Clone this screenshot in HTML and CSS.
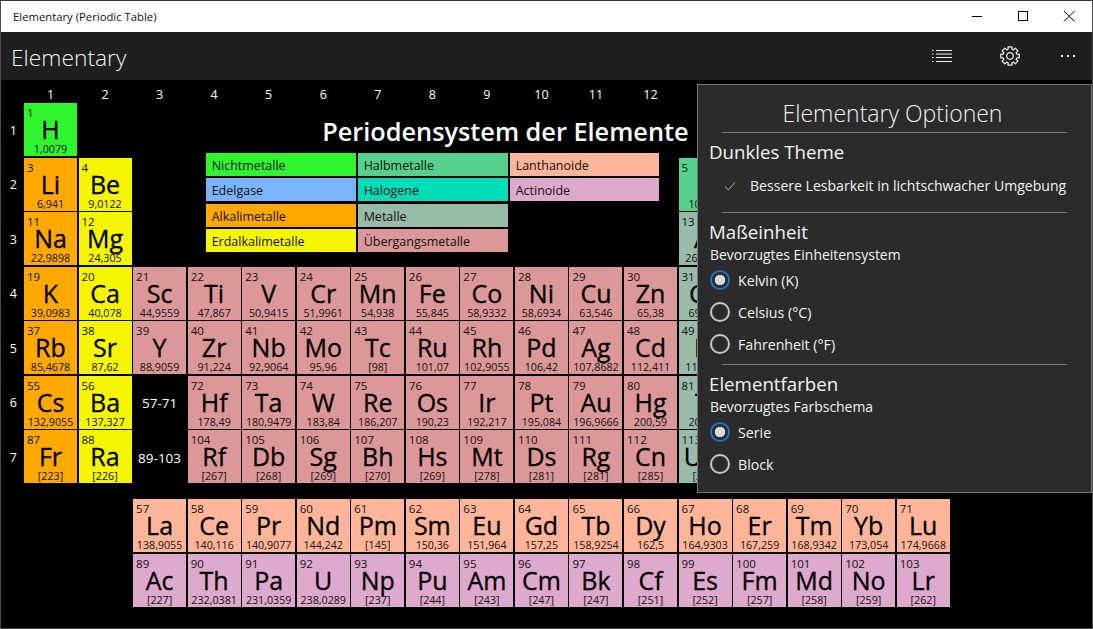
FILE: index.html
```html
<!DOCTYPE html>
<html lang="de">
<head>
  <meta charset="UTF-8" />
  <title>Elementary (Periodic Table)</title>
  <link rel="stylesheet" href="styles.css">
</head>
<body>
  <div class="window">
    <div class="titlebar">
      <span class="title-text">Elementary (Periodic Table)</span>
      <div class="win-buttons">
        <svg class="win-btn" viewBox="0 0 46 31"><path d="M18 15.500h10" stroke="#000" fill="none"/></svg>
        <svg class="win-btn" viewBox="0 0 46 31"><rect x="18.500" y="10.500" width="9" height="9" stroke="#000" fill="none"/></svg>
        <svg class="win-btn" viewBox="0 0 46 31"><path d="M18 10l10.500 10.500M28.500 10L18 20.500" stroke="#000" fill="none"/></svg>
      </div>
    </div>

    <div class="appbar">
      <span class="app-name">Elementary</span>
      <div class="app-actions">
        <svg class="list-icon" viewBox="0 0 20 14">
          <path d="M0 1.500h1.500M4 1.500h16M0 5h1.500M4 5h16M0 8.500h1.500M4 8.500h16M0 12.500h1.500M4 12.500h16" stroke="#eee" stroke-width="1.200" fill="none"/>
        </svg>
        <svg class="gear-icon" viewBox="-10 -10 20 20">
          <path d="M-1.930-6.730L-1.950-9.200H1.950L1.930-6.730L3.390-6.120L5.130-7.880L7.880-5.130L6.120-3.390L6.730-1.930L9.200-1.950V1.950L6.730 1.930L6.120 3.390L7.880 5.130L5.130 7.880L3.390 6.120L1.930 6.730L1.950 9.200H-1.950L-1.930 6.730L-3.390 6.120L-5.130 7.880L-7.880 5.130L-6.120 3.390L-6.730 1.930L-9.200 1.950V-1.950L-6.730-1.930L-6.120-3.390L-7.880-5.130L-5.130-7.880L-3.390-6.120Z" stroke="#eee" stroke-width="1.300" stroke-linejoin="round" fill="none"/>
          <circle r="3.300" stroke="#eee" stroke-width="1.300" fill="none"/>
        </svg>
        <span class="dots"><i></i><i></i><i></i></span>
      </div>
    </div>

    <div class="content">
      <div class="table">
        <span class="corner"></span>
        <span class="col-no">1</span><span class="col-no">2</span><span class="col-no">3</span><span class="col-no">4</span><span class="col-no">5</span><span class="col-no">6</span><span class="col-no">7</span><span class="col-no">8</span><span class="col-no">9</span><span class="col-no">10</span><span class="col-no">11</span><span class="col-no">12</span>

        <h1 class="table-title">Periodensystem der Elemente</h1>
        <div class="legend">
          <span class="nonmetal">Nichtmetalle</span>
          <span class="metalloid">Halbmetalle</span>
          <span class="lanth">Lanthanoide</span>
          <span class="noble">Edelgase</span>
          <span class="halogen">Halogene</span>
          <span class="actin">Actinoide</span>
          <span class="alkali">Alkalimetalle</span>
          <span class="metal">Metalle</span>
          <span class="blank"></span>
          <span class="earth">Erdalkalimetalle</span>
          <span class="trans">Übergangsmetalle</span>
        </div>

        <span class="row-no">1</span>
        <div class="el nonmetal"><span class="num">1</span><span class="sym">H</span><span class="mass">1,0079</span></div>

        <span class="row-no">2</span>
        <div class="el alkali"><span class="num">3</span><span class="sym">Li</span><span class="mass">6,941</span></div>
        <div class="el earth"><span class="num">4</span><span class="sym">Be</span><span class="mass">9,0122</span></div>
        <div class="el metalloid group13"><span class="num">5</span><span class="sym">B</span><span class="mass">10,811</span></div>

        <span class="row-no">3</span>
        <div class="el alkali"><span class="num">11</span><span class="sym">Na</span><span class="mass">22,9898</span></div>
        <div class="el earth"><span class="num">12</span><span class="sym">Mg</span><span class="mass">24,305</span></div>
        <div class="el metal group13"><span class="num">13</span><span class="sym">Al</span><span class="mass">26,9815</span></div>

        <span class="row-no">4</span>
        <div class="el alkali"><span class="num">19</span><span class="sym">K</span><span class="mass">39,0983</span></div>
        <div class="el earth"><span class="num">20</span><span class="sym">Ca</span><span class="mass">40,078</span></div>
        <div class="el trans"><span class="num">21</span><span class="sym">Sc</span><span class="mass">44,9559</span></div>
        <div class="el trans"><span class="num">22</span><span class="sym">Ti</span><span class="mass">47,867</span></div>
        <div class="el trans"><span class="num">23</span><span class="sym">V</span><span class="mass">50,9415</span></div>
        <div class="el trans"><span class="num">24</span><span class="sym">Cr</span><span class="mass">51,9961</span></div>
        <div class="el trans"><span class="num">25</span><span class="sym">Mn</span><span class="mass">54,938</span></div>
        <div class="el trans"><span class="num">26</span><span class="sym">Fe</span><span class="mass">55,845</span></div>
        <div class="el trans"><span class="num">27</span><span class="sym">Co</span><span class="mass">58,9332</span></div>
        <div class="el trans"><span class="num">28</span><span class="sym">Ni</span><span class="mass">58,6934</span></div>
        <div class="el trans"><span class="num">29</span><span class="sym">Cu</span><span class="mass">63,546</span></div>
        <div class="el trans"><span class="num">30</span><span class="sym">Zn</span><span class="mass">65,38</span></div>
        <div class="el metal"><span class="num">31</span><span class="sym">Ga</span><span class="mass">69,723</span></div>

        <span class="row-no">5</span>
        <div class="el alkali"><span class="num">37</span><span class="sym">Rb</span><span class="mass">85,4678</span></div>
        <div class="el earth"><span class="num">38</span><span class="sym">Sr</span><span class="mass">87,62</span></div>
        <div class="el trans"><span class="num">39</span><span class="sym">Y</span><span class="mass">88,9059</span></div>
        <div class="el trans"><span class="num">40</span><span class="sym">Zr</span><span class="mass">91,224</span></div>
        <div class="el trans"><span class="num">41</span><span class="sym">Nb</span><span class="mass">92,9064</span></div>
        <div class="el trans"><span class="num">42</span><span class="sym">Mo</span><span class="mass">95,96</span></div>
        <div class="el trans"><span class="num">43</span><span class="sym">Tc</span><span class="mass">[98]</span></div>
        <div class="el trans"><span class="num">44</span><span class="sym">Ru</span><span class="mass">101,07</span></div>
        <div class="el trans"><span class="num">45</span><span class="sym">Rh</span><span class="mass">102,9055</span></div>
        <div class="el trans"><span class="num">46</span><span class="sym">Pd</span><span class="mass">106,42</span></div>
        <div class="el trans"><span class="num">47</span><span class="sym">Ag</span><span class="mass">107,8682</span></div>
        <div class="el trans"><span class="num">48</span><span class="sym">Cd</span><span class="mass">112,411</span></div>
        <div class="el metal"><span class="num">49</span><span class="sym">In</span><span class="mass">114,818</span></div>

        <span class="row-no">6</span>
        <div class="el alkali"><span class="num">55</span><span class="sym">Cs</span><span class="mass">132,9055</span></div>
        <div class="el earth"><span class="num">56</span><span class="sym">Ba</span><span class="mass">137,327</span></div>
        <span class="range">57-71</span>
        <div class="el trans"><span class="num">72</span><span class="sym">Hf</span><span class="mass">178,49</span></div>
        <div class="el trans"><span class="num">73</span><span class="sym">Ta</span><span class="mass">180,9479</span></div>
        <div class="el trans"><span class="num">74</span><span class="sym">W</span><span class="mass">183,84</span></div>
        <div class="el trans"><span class="num">75</span><span class="sym">Re</span><span class="mass">186,207</span></div>
        <div class="el trans"><span class="num">76</span><span class="sym">Os</span><span class="mass">190,23</span></div>
        <div class="el trans"><span class="num">77</span><span class="sym">Ir</span><span class="mass">192,217</span></div>
        <div class="el trans"><span class="num">78</span><span class="sym">Pt</span><span class="mass">195,084</span></div>
        <div class="el trans"><span class="num">79</span><span class="sym">Au</span><span class="mass">196,9666</span></div>
        <div class="el trans"><span class="num">80</span><span class="sym">Hg</span><span class="mass">200,59</span></div>
        <div class="el metal"><span class="num">81</span><span class="sym">Tl</span><span class="mass">204,38</span></div>

        <span class="row-no">7</span>
        <div class="el alkali"><span class="num">87</span><span class="sym">Fr</span><span class="mass">[223]</span></div>
        <div class="el earth"><span class="num">88</span><span class="sym">Ra</span><span class="mass">[226]</span></div>
        <span class="range">89-103</span>
        <div class="el trans"><span class="num">104</span><span class="sym">Rf</span><span class="mass">[267]</span></div>
        <div class="el trans"><span class="num">105</span><span class="sym">Db</span><span class="mass">[268]</span></div>
        <div class="el trans"><span class="num">106</span><span class="sym">Sg</span><span class="mass">[269]</span></div>
        <div class="el trans"><span class="num">107</span><span class="sym">Bh</span><span class="mass">[270]</span></div>
        <div class="el trans"><span class="num">108</span><span class="sym">Hs</span><span class="mass">[269]</span></div>
        <div class="el trans"><span class="num">109</span><span class="sym">Mt</span><span class="mass">[278]</span></div>
        <div class="el trans"><span class="num">110</span><span class="sym">Ds</span><span class="mass">[281]</span></div>
        <div class="el trans"><span class="num">111</span><span class="sym">Rg</span><span class="mass">[281]</span></div>
        <div class="el trans"><span class="num">112</span><span class="sym">Cn</span><span class="mass">[285]</span></div>
        <div class="el metal"><span class="num">113</span><span class="sym">Uut</span><span class="mass">[284]</span></div>

        <div class="f-gap"></div>

        <div class="el lanth f-start"><span class="num">57</span><span class="sym">La</span><span class="mass">138,9055</span></div>
        <div class="el lanth"><span class="num">58</span><span class="sym">Ce</span><span class="mass">140,116</span></div>
        <div class="el lanth"><span class="num">59</span><span class="sym">Pr</span><span class="mass">140,9077</span></div>
        <div class="el lanth"><span class="num">60</span><span class="sym">Nd</span><span class="mass">144,242</span></div>
        <div class="el lanth"><span class="num">61</span><span class="sym">Pm</span><span class="mass">[145]</span></div>
        <div class="el lanth"><span class="num">62</span><span class="sym">Sm</span><span class="mass">150,36</span></div>
        <div class="el lanth"><span class="num">63</span><span class="sym">Eu</span><span class="mass">151,964</span></div>
        <div class="el lanth"><span class="num">64</span><span class="sym">Gd</span><span class="mass">157,25</span></div>
        <div class="el lanth"><span class="num">65</span><span class="sym">Tb</span><span class="mass">158,9254</span></div>
        <div class="el lanth"><span class="num">66</span><span class="sym">Dy</span><span class="mass">162,5</span></div>
        <div class="el lanth"><span class="num">67</span><span class="sym">Ho</span><span class="mass">164,9303</span></div>
        <div class="el lanth"><span class="num">68</span><span class="sym">Er</span><span class="mass">167,259</span></div>
        <div class="el lanth"><span class="num">69</span><span class="sym">Tm</span><span class="mass">168,9342</span></div>
        <div class="el lanth"><span class="num">70</span><span class="sym">Yb</span><span class="mass">173,054</span></div>
        <div class="el lanth"><span class="num">71</span><span class="sym">Lu</span><span class="mass">174,9668</span></div>

        <div class="el actin f-start"><span class="num">89</span><span class="sym">Ac</span><span class="mass">[227]</span></div>
        <div class="el actin"><span class="num">90</span><span class="sym">Th</span><span class="mass">232,0381</span></div>
        <div class="el actin"><span class="num">91</span><span class="sym">Pa</span><span class="mass">231,0359</span></div>
        <div class="el actin"><span class="num">92</span><span class="sym">U</span><span class="mass">238,0289</span></div>
        <div class="el actin"><span class="num">93</span><span class="sym">Np</span><span class="mass">[237]</span></div>
        <div class="el actin"><span class="num">94</span><span class="sym">Pu</span><span class="mass">[244]</span></div>
        <div class="el actin"><span class="num">95</span><span class="sym">Am</span><span class="mass">[243]</span></div>
        <div class="el actin"><span class="num">96</span><span class="sym">Cm</span><span class="mass">[247]</span></div>
        <div class="el actin"><span class="num">97</span><span class="sym">Bk</span><span class="mass">[247]</span></div>
        <div class="el actin"><span class="num">98</span><span class="sym">Cf</span><span class="mass">[251]</span></div>
        <div class="el actin"><span class="num">99</span><span class="sym">Es</span><span class="mass">[252]</span></div>
        <div class="el actin"><span class="num">100</span><span class="sym">Fm</span><span class="mass">[257]</span></div>
        <div class="el actin"><span class="num">101</span><span class="sym">Md</span><span class="mass">[258]</span></div>
        <div class="el actin"><span class="num">102</span><span class="sym">No</span><span class="mass">[259]</span></div>
        <div class="el actin"><span class="num">103</span><span class="sym">Lr</span><span class="mass">[262]</span></div>
      </div>

      <aside class="options">
        <h2 class="options-title">Elementary Optionen</h2>
        <hr>
        <h3>Dunkles Theme</h3>
        <div class="check-row">
          <svg class="check" viewBox="0 0 14 11"><path d="M1 6l4 4 8-9" stroke="#c4c4c4" fill="none"/></svg>
          <span>Bessere Lesbarkeit in lichtschwacher Umgebung</span>
        </div>
        <hr>
        <h3>Maßeinheit</h3>
        <p class="sub">Bevorzugtes Einheitensystem</p>
        <div class="radio on"><i></i><span>Kelvin (K)</span></div>
        <div class="radio"><i></i><span>Celsius (°C)</span></div>
        <div class="radio"><i></i><span>Fahrenheit (°F)</span></div>
        <hr class="after-radios">
        <h3>Elementfarben</h3>
        <p class="sub">Bevorzugtes Farbschema</p>
        <div class="radio on"><i></i><span>Serie</span></div>
        <div class="radio"><i></i><span>Block</span></div>
      </aside>
    </div>
  </div>
</body>
</html>
```
FILE: styles.css
```css
html, body {
  margin: 0;
  height: 100%;
  overflow: hidden;
}

body {
  font-family: "Open Sans", "Noto Sans", sans-serif;
  background: #000;
}

.window {
  height: 629px;
  box-sizing: border-box;
  border: 1px solid #4c4c4c;
  border-top-color: #333;
  display: flex;
  flex-direction: column;
}

.titlebar {
  height: 31px;
  background: #fff;
  display: flex;
  align-items: center;
  justify-content: space-between;
  flex: none;
}

.title-text {
  font-size: 11.300px;
  color: #111;
  padding-left: 12px;
}

.win-buttons {
  display: flex;
}

.win-btn {
  width: 46px;
  height: 31px;
}

.appbar {
  height: 48px;
  background: #1f1f1f;
  display: flex;
  align-items: center;
  justify-content: space-between;
  flex: none;
}

.app-name {
  font-size: 22.800px;
  font-weight: 300;
  color: #f2f2f2;
  padding: 2px 0 0 10px;
}

.app-actions {
  display: flex;
  align-items: center;
  gap: 48px;
  padding-right: 17px;
}

.list-icon {
  width: 20px;
  height: 14px;
}

.gear-icon {
  width: 20px;
  height: 20px;
}

.dots {
  display: flex;
  gap: 4px;
  margin-left: -7px;
}

.dots i {
  width: 2px;
  height: 2px;
  background: #eee;
}

.content {
  flex: 1;
  position: relative;
}

.table {
  display: grid;
  grid-template-columns: 21.440px repeat(18, 53px);
  grid-template-rows: 21.500px repeat(7, 53px) 13px 53px 53px;
  column-gap: 1.560px;
  row-gap: 1.500px;
}

.col-no, .row-no, .range {
  color: #fff;
  font-size: 12.500px;
  display: flex;
  align-items: center;
  justify-content: center;
}

.col-no {
  padding-top: 8px;
}

.row-no {
  grid-column: 1;
  padding: 1px 0 0 3px;
}

.range {
  font-size: 13.500px;
  padding-top: 2px;
}

.table-title {
  grid-column: 5 / 15;
  grid-row: 2;
  margin: 0;
  padding: 11px 43px 0 0;
  text-align: right;
  color: #fff;
  font-size: 25.300px;
  font-weight: 600;
  white-space: nowrap;
}

.legend {
  grid-column: 5 / 14;
  grid-row: 3 / 5;
  margin: -5px 0 0 18px;
  display: grid;
  grid-template-columns: 150px 150px 149.500px;
  grid-auto-rows: 23px;
  column-gap: 2px;
  row-gap: 2.500px;
  align-content: start;
}

.legend span {
  font-size: 12.500px;
  color: #111;
  padding-left: 6px;
  line-height: 25px;
}

.legend .blank {
  visibility: hidden;
}

.el {
  color: #000;
  display: flex;
  flex-direction: column;
  align-items: center;
  padding-top: 4px;
  box-sizing: border-box;
  overflow: hidden;
}

.num {
  align-self: flex-start;
  font-size: 11.500px;
  line-height: 12px;
  padding-left: 3px;
  color: #111;
}

.sym {
  font-size: 25px;
  font-weight: 500;
  line-height: 24px;
  margin-top: -2px;
  -webkit-text-stroke: .3px #000;
}

.mass {
  font-size: 10.700px;
  line-height: 12px;
  margin-top: 2px;
  color: #111;
  white-space: nowrap;
}

.group13 {
  grid-column: 14;
}

.f-gap {
  grid-column: 1 / -1;
}

.f-start {
  grid-column: 4;
}

.nonmetal { background: #2ff52f; }
.metalloid { background: #55d18b; }
.noble { background: #79b4fc; }
.halogen { background: #00dcb8; }
.alkali { background: #ffa800; }
.earth { background: #f5f500; }
.metal { background: #99bba9; }
.trans { background: #dc9898; }
.lanth { background: #ffb599; }
.actin { background: #dda9cc; }

.options {
  position: absolute;
  left: 696px;
  top: 4px;
  width: 393px;
  height: 407px;
  background: #2b2b2b;
  border: 1px solid #777;
  color: #f2f2f2;
}

.options-title {
  margin: 11px 4px 2px 0;
  font-size: 23px;
  font-weight: 300;
  line-height: 34px;
  text-align: center;
}

.options hr {
  margin: 1px 24px 0;
  border: none;
  height: 1px;
  background: #777;
}

.options h3 {
  margin: 7px 0 0 11px;
  font-size: 18.700px;
  font-weight: 400;
  line-height: 24px;
}

.sub {
  margin: 0 0 -2px 12px;
  font-size: 13.950px;
  line-height: 22px;
}

.check-row {
  display: flex;
  align-items: center;
  font-size: 14.070px;
  height: 45px;
  margin-top: -1px;
  padding-left: 26px;
  gap: 14px;
}

.check {
  width: 12px;
  height: 10px;
}

.check-row + hr {
  margin-top: 4px;
}

.options .after-radios {
  margin-top: 4px;
}

.radio {
  display: flex;
  align-items: center;
  height: 32px;
  margin-left: 12px;
  gap: 8px;
  font-size: 14.200px;
}

.radio i {
  width: 20px;
  height: 20px;
  box-sizing: border-box;
  border: 2px solid #c8c8c8;
  border-radius: 50%;
}

.radio.on i {
  border-color: #1e74c8;
  background: radial-gradient(circle, #d8d8d8 0 5px, #2b2b2b 5.500px);
}
```
